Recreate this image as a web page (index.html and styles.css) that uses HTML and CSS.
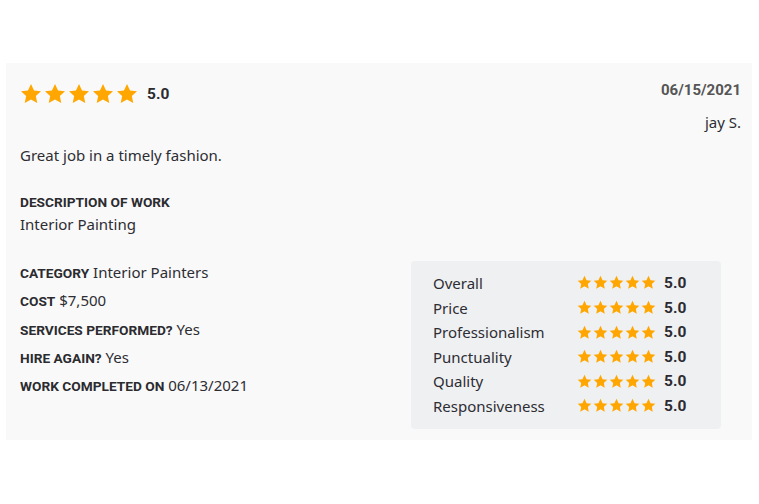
FILE: index.html
```html
<!DOCTYPE html>
<html>
<head>
<meta charset="utf-8">
<link rel="stylesheet" href="styles.css">
</head>
<body>
<svg width="0" height="0" class="defs">
  <defs>
    <symbol id="star" viewBox="0 0 24 24">
      <path d="M12 1.2l3.3 7 7.6.9-5.6 5.2 1.5 7.5L12 18l-6.8 3.8 1.5-7.5L1.1 9.1l7.6-.9z"/>
    </symbol>
  </defs>
</svg>
<div class="card">
  <div class="head">
    <div class="rating">
      <div class="stars big">
        <svg><use href="#star"/></svg><svg><use href="#star"/></svg><svg><use href="#star"/></svg><svg><use href="#star"/></svg><svg><use href="#star"/></svg>
      </div>
      <span class="score">5.0</span>
    </div>
    <div class="meta">
      <div class="date">06/15/2021</div>
      <div class="author">jay S.</div>
    </div>
  </div>
  <p class="comment">Great job in a timely fashion.</p>
  <div class="desc">
    <div class="label">DESCRIPTION OF WORK</div>
    <div class="value">Interior Painting</div>
  </div>
  <div class="bottom">
    <ul class="facts">
      <li><span class="label">CATEGORY</span> Interior Painters</li>
      <li><span class="label">COST</span> $7,500</li>
      <li><span class="label">SERVICES PERFORMED?</span> Yes</li>
      <li><span class="label">HIRE AGAIN?</span> Yes</li>
      <li><span class="label">WORK COMPLETED ON</span> 06/13/2021</li>
    </ul>
    <div class="panel">
      <div class="row"><span class="name">Overall</span><div class="stars small"><svg><use href="#star"/></svg><svg><use href="#star"/></svg><svg><use href="#star"/></svg><svg><use href="#star"/></svg><svg><use href="#star"/></svg></div><span class="num">5.0</span></div>
      <div class="row"><span class="name">Price</span><div class="stars small"><svg><use href="#star"/></svg><svg><use href="#star"/></svg><svg><use href="#star"/></svg><svg><use href="#star"/></svg><svg><use href="#star"/></svg></div><span class="num">5.0</span></div>
      <div class="row"><span class="name">Professionalism</span><div class="stars small"><svg><use href="#star"/></svg><svg><use href="#star"/></svg><svg><use href="#star"/></svg><svg><use href="#star"/></svg><svg><use href="#star"/></svg></div><span class="num">5.0</span></div>
      <div class="row"><span class="name">Punctuality</span><div class="stars small"><svg><use href="#star"/></svg><svg><use href="#star"/></svg><svg><use href="#star"/></svg><svg><use href="#star"/></svg><svg><use href="#star"/></svg></div><span class="num">5.0</span></div>
      <div class="row"><span class="name">Quality</span><div class="stars small"><svg><use href="#star"/></svg><svg><use href="#star"/></svg><svg><use href="#star"/></svg><svg><use href="#star"/></svg><svg><use href="#star"/></svg></div><span class="num">5.0</span></div>
      <div class="row"><span class="name">Responsiveness</span><div class="stars small"><svg><use href="#star"/></svg><svg><use href="#star"/></svg><svg><use href="#star"/></svg><svg><use href="#star"/></svg><svg><use href="#star"/></svg></div><span class="num">5.0</span></div>
    </div>
  </div>
</div>
</body>
</html>
```

FILE: styles.css
```css
* { box-sizing: border-box; }
html, body { margin: 0; padding: 0; background: #fff; }
body {
  font-family: "Noto Sans", "Liberation Sans", sans-serif;
  color: #2d2d33;
  padding: 63px 7px 0 6px;
}
.defs { position: absolute; }
.card {
  background: #f9f9f9;
  height: 377px;
  padding: 20px 11px 0 14px;
}
.head {
  display: flex;
  justify-content: space-between;
  align-items: flex-start;
}
.rating {
  display: flex;
  align-items: center;
  gap: 9px;
  height: 21px;
}
.stars { display: flex; fill: #ffa600; }
.stars.big { gap: 2px; }
.stars.big svg { width: 22px; height: 22px; }
.stars.small { gap: 1px; margin-right: 8px; }
.stars.small svg { width: 15px; height: 15px; }
.score, .num {
  font-family: "Roboto", "Liberation Sans", sans-serif;
  font-weight: 700;
  font-size: 15.5px;
  color: #2b2b30;
}
.score { margin-top: 1px; }
.meta { text-align: right; margin-top: -3px; }
.date {
  font-family: "Roboto", "Liberation Sans", sans-serif;
  font-weight: 700;
  font-size: 15px;
  line-height: 20px;
  color: #555;
}
.author {
  font-size: 15px;
  line-height: 20px;
  margin-top: 12px;
}
.comment {
  margin: 13px 0 0;
  font-size: 15px;
  line-height: 20px;
}
.desc { margin-top: 28px; }
.label {
  font-family: "Roboto", "Liberation Sans", sans-serif;
  font-weight: 700;
  font-size: 13.7px;
  line-height: 18px;
  text-transform: uppercase;
  color: #2b2b30;
}
.value { font-size: 15px; line-height: 20px; margin-top: 3px; }
.bottom {
  display: flex;
  justify-content: space-between;
  margin-top: 27px;
  padding-right: 20px;
}
.facts {
  list-style: none;
  margin: 1px 0 0;
  padding: 0;
  font-size: 15px;
}
.facts li { line-height: 20px; height: 28.25px; }
.panel {
  width: 310px;
  height: 168px;
  background: #eff0f2;
  border-radius: 4px;
  padding: 9.7px 0 0 22px;
}
.row {
  display: flex;
  align-items: center;
  height: 24.6px;
  font-size: 15px;
}
.name { width: 144px; }
```
